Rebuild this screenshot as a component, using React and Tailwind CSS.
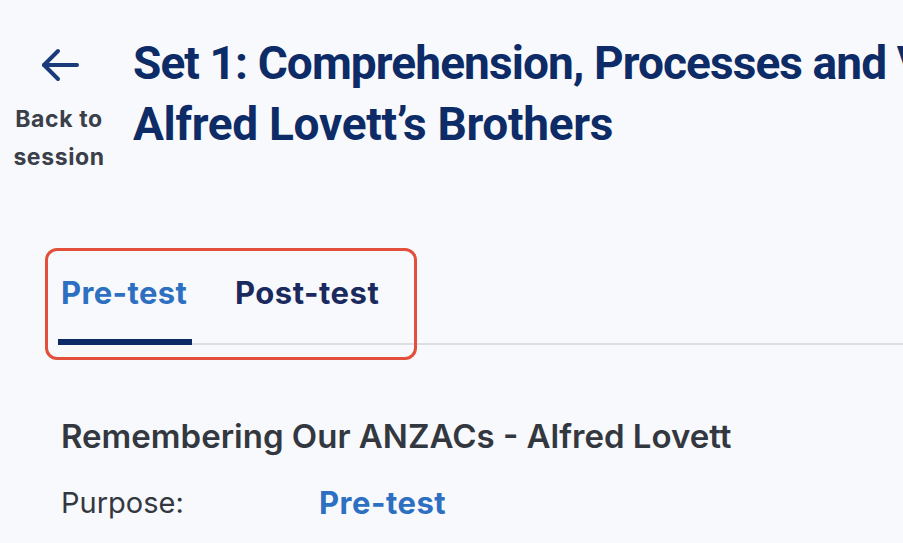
export default function App() {
  return (
    <div className="min-h-[543px] w-full overflow-hidden bg-[#f8f9fc]" style={{ fontFamily: "Inter, 'Liberation Sans', sans-serif" }}>
      <div className="flex items-start pt-[47px]">
        <div className="flex w-[118px] shrink-0 flex-col items-center">
          <svg width="40" height="36" viewBox="0 0 40 36" fill="none" stroke="#1b3a7a" strokeWidth="4" strokeLinecap="round" strokeLinejoin="round" className="ml-[1px]">
            <path d="M37 18H4" />
            <path d="M18 4L4 18L18 32" />
          </svg>
          <div className="mt-[17px] text-center text-[23px] font-bold leading-[38px] tracking-[0.6px] text-[#3a3f4a]">
            Back to
            <br />
            session
          </div>
        </div>
        <h1 className="mt-[-14px] whitespace-nowrap pl-[15px] text-[46px] font-bold leading-[61px] tracking-[-0.9px] text-[#0d2b66]" style={{ fontFamily: "Roboto, 'Liberation Sans', sans-serif" }}>
          Set 1: Comprehension, Processes and Vocabulary
          <br />
          <span className="tracking-[-0.3px]">Alfred Lovett’s Brothers</span>
        </h1>
      </div>

      <div className="relative mt-[96px] ml-[58px]">
        <div className="absolute left-[-13px] top-[-24px] h-[112px] w-[372px] rounded-[12px] border-[3px] border-[#e2503c]" />
        <div className="flex items-end border-b-2 border-[#dcdee3]">
          <div className="mb-[-2px] flex flex-col">
            <span className="px-[3px] pb-[28px] pt-[3px] text-[31px] font-bold leading-[36px] tracking-[0.4px] text-[#2d6fc0]">Pre-test</span>
            <div className="h-[6px] w-[134px] bg-[#0b2a66]" />
          </div>
          <div className="ml-[43px] pb-[32px] text-[31px] font-bold leading-[36px] tracking-[0.5px] text-[#1a2a5e]">Post-test</div>
        </div>
      </div>

      <div className="ml-[61px] mt-[71px] text-[33px] font-semibold leading-[40px] text-[#333840]">
        Remembering Our ANZACs - Alfred Lovett
      </div>
      <div className="ml-[61px] mt-[29px] flex items-center">
        <span className="w-[258px] text-[29px] leading-[36px] text-[#333840]">Purpose:</span>
        <span className="text-[31px] font-bold leading-[36px] tracking-[0.5px] text-[#2d6fc0]">Pre-test</span>
      </div>
    </div>
  );
}
